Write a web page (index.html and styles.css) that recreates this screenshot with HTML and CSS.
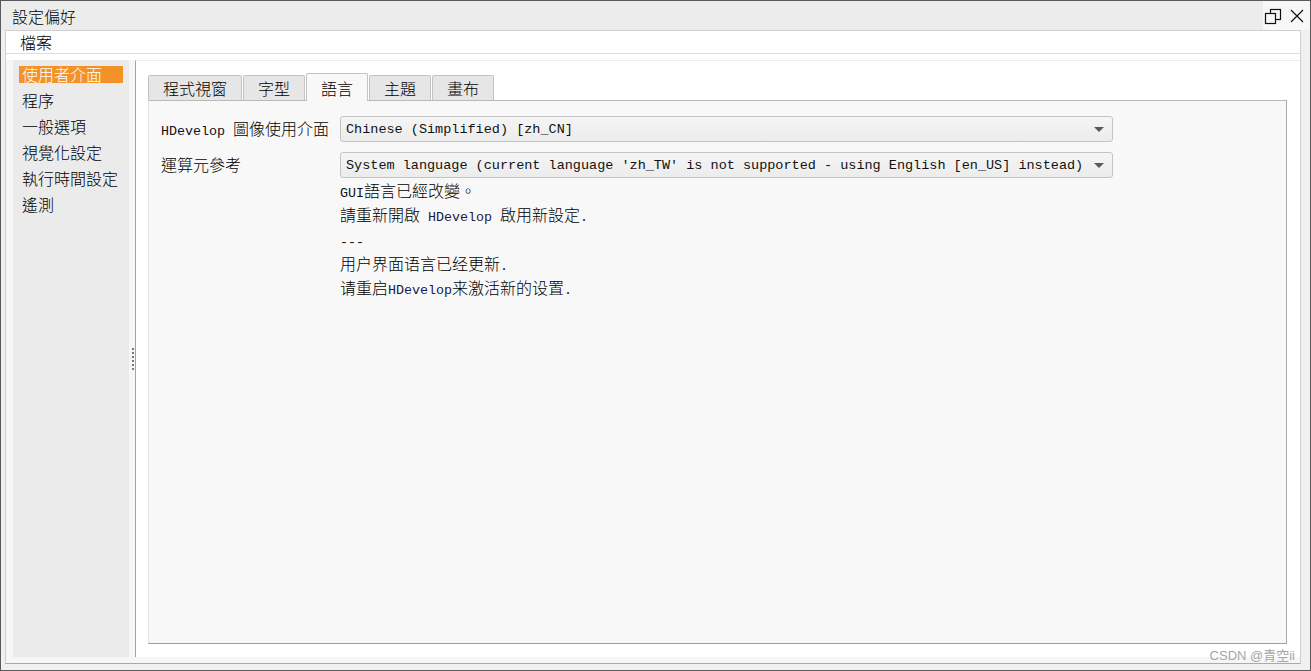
FILE: index.html
```html
<!DOCTYPE html>
<html lang="zh-Hant">
<head>
<meta charset="utf-8">
<title>設定偏好</title>
<link rel="stylesheet" href="styles.css">
</head>
<body>
<div class="window">
  <div class="titlebar">
    <div class="title">設定偏好</div>
    <div class="winbtns">
      <svg class="ico" width="18" height="18" viewBox="0 0 18 18">
        <rect x="6.5" y="2.5" width="10" height="10" fill="none" stroke="#111" stroke-width="1.2"/>
        <rect x="1.5" y="6.5" width="10" height="10" fill="#f7f7f7" stroke="#111" stroke-width="1.2"/>
      </svg>
      <svg class="ico" width="14" height="14" viewBox="0 0 14 14">
        <path d="M1 1 L13 13 M13 1 L1 13" stroke="#111" stroke-width="1.2" fill="none"/>
      </svg>
    </div>
  </div>
  <div class="inner">
    <div class="menubar"><span class="menuitem">檔案</span></div>
    <div class="body">
      <ul class="sidebar">
        <li class="item active">使用者介面</li>
        <li class="item">程序</li>
        <li class="item">一般選項</li>
        <li class="item">視覺化設定</li>
        <li class="item">執行時間設定</li>
        <li class="item">遙測</li>
      </ul>
      <div class="splitter"><div class="handle"><i></i><i></i><i></i><i></i><i></i><i></i></div></div>
      <div class="main">
        <div class="tabs">
          <div class="tab wide">程式視窗</div>
          <div class="tab">字型</div>
          <div class="tab selected">語言</div>
          <div class="tab">主題</div>
          <div class="tab">畫布</div>
        </div>
        <div class="panel">
          <div class="form">
            <div class="label"><span class="a">HDevelop </span>圖像使用介面</div>
            <div class="combo">Chinese (Simplified) [zh_CN]<span class="arrow"></span></div>
            <div class="label">運算元參考</div>
            <div class="combo">System language (current language 'zh_TW' is not supported - using English [en_US] instead)<span class="arrow"></span></div>
            <div class="messages">
              <div class="line"><span class="a">GUI</span>語言已經改變。</div>
              <div class="line">請重新開啟<span class="a hd"> HDevelop </span>啟用新設定<span class="a">.</span></div>
              <div class="line"><span class="a">---</span></div>
              <div class="line">用户界面语言已经更新<span class="a">.</span></div>
              <div class="line">请重启<span class="a hd">HDevelop</span>来激活新的设置<span class="a">.</span></div>
            </div>
          </div>
        </div>
      </div>
    </div>
  </div>
  <div class="watermark">CSDN @青空ii</div>
</div>
</body>
</html>
```

FILE: styles.css
```css
* { box-sizing: border-box; }
html, body { margin: 0; padding: 0; }
body {
  width: 1311px;
  height: 671px;
  overflow: hidden;
  font-family: "Noto Sans CJK TC", "Noto Sans CJK SC", sans-serif;
  font-weight: 300;
  font-size: 16px;
  color: #000;
  background: #f0f0f0;
}
.a {
  font-family: "Liberation Mono", "DejaVu Sans Mono", monospace;
  font-weight: 400;
  font-size: 13.33px;
  white-space: pre;
  color: #111;
}
.hd { color: #1a1a48; }
.window {
  position: relative;
  width: 1311px;
  height: 671px;
  border: 1px solid #5a5a5a;
  background: #f0f0f0;
  display: flex;
  flex-direction: column;
}
.titlebar {
  height: 29px;
  flex: none;
  display: flex;
  align-items: center;
  background: #ececec;
  padding-left: 11px;
}
.title { flex: 1; line-height: 29px; padding-top: 1px; }
.winbtns {
  width: 47px;
  height: 29px;
  background: #f7f7f7;
  display: flex;
  align-items: center;
  gap: 8px;
  padding-left: 1px;
}
.winbtns .ico { display: block; }
.inner {
  flex: 1;
  display: flex;
  flex-direction: column;
  margin: 0 9px 6px 4px;
  border: 1px solid #cfcfcf;
  border-bottom-color: #a9a9a9;
  background: #f6f6f6;
}
.menubar {
  height: 23px;
  flex: none;
  background: #fff;
  border-bottom: 1px solid #dedede;
  padding-left: 14px;
  line-height: 22px;
}
.body {
  flex: 1;
  display: flex;
  padding: 6px 0 6px 7px;
  background: linear-gradient(#fff 0, #fff 6px, #f6f6f6 6px);
}
.sidebar {
  list-style: none;
  margin: 0;
  width: 116px;
  flex: none;
  background: #ebebeb;
  padding: 6px 6px;
  display: flex;
  flex-direction: column;
  gap: 9px;
}
.item {
  height: 17px;
  line-height: 16px;
  padding-left: 3px;
  white-space: nowrap;
}
.item.active { background: #f39228; color: #fff; }
.splitter {
  width: 6px;
  flex: none;
  display: flex;
  align-items: center;
  justify-content: flex-end;
  background: #f6f6f6;
}
.handle {
  display: flex;
  flex-direction: column;
  gap: 2px;
  width: 2px;
  margin-right: 1px;
}
.handle i { display: block; width: 2px; height: 2px; background: #7a7a7a; }
.main {
  flex: 1;
  display: flex;
  flex-direction: column;
  background: #fff;
  border-left: 1px solid #a3a3a3;
  border-top: 1px solid #ececec;
  padding: 12px 13px 13px 12px;
}
.tabs {
  display: flex;
  align-items: flex-end;
  gap: 1px;
  height: 27px;
  flex: none;
  position: relative;
  z-index: 1;
}
.tab {
  width: 62px;
  height: 25px;
  border: 1px solid #c3c3c3;
  border-bottom: none;
  border-radius: 2px 2px 0 0;
  background: #e6e6e6;
  text-align: center;
  line-height: 24px;
}
.tab.wide { width: 94px; }
.tab.selected {
  height: 28px;
  margin-bottom: -1px;
  background: #f8f8f8;
  line-height: 28px;
}
.panel {
  flex: 1;
  background: #f8f8f8;
  border: 1px solid #b9b9b9;
  border-left-color: #e4e4e4;
  border-right-color: #a9a9a9;
  border-bottom-color: #9f9f9f;
  padding: 15px 12px 0 12px;
}
.form {
  display: grid;
  grid-template-columns: 179px 773px;
  grid-auto-rows: auto;
  row-gap: 10px;
}
.label {
  height: 26px;
  line-height: 25px;
  white-space: nowrap;
}
.combo {
  position: relative;
  height: 26px;
  line-height: 25px;
  border: 1px solid #c4c4c4;
  border-radius: 3px;
  background: linear-gradient(#f5f5f5, #ececec);
  padding-left: 5px;
  white-space: nowrap;
  overflow: hidden;
  font-family: "Liberation Mono", "DejaVu Sans Mono", monospace;
  font-weight: 400;
  font-size: 13.5px;
  color: #111;
}
.arrow {
  position: absolute;
  right: 8px;
  top: 10px;
  width: 0;
  height: 0;
  border-left: 5px solid transparent;
  border-right: 5px solid transparent;
  border-top: 5px solid #5a5a5a;
}
.messages {
  grid-column: 2;
  margin-top: -10px;
}
.line {
  height: 24.3px;
  line-height: 24.3px;
  white-space: nowrap;
}
.watermark {
  position: absolute;
  right: 15px;
  bottom: 7px;
  font-family: "Liberation Sans", "Noto Sans CJK SC", sans-serif;
  font-weight: 400;
  font-size: 13px;
  color: #a6a6a6;
  line-height: 14px;
}
```
